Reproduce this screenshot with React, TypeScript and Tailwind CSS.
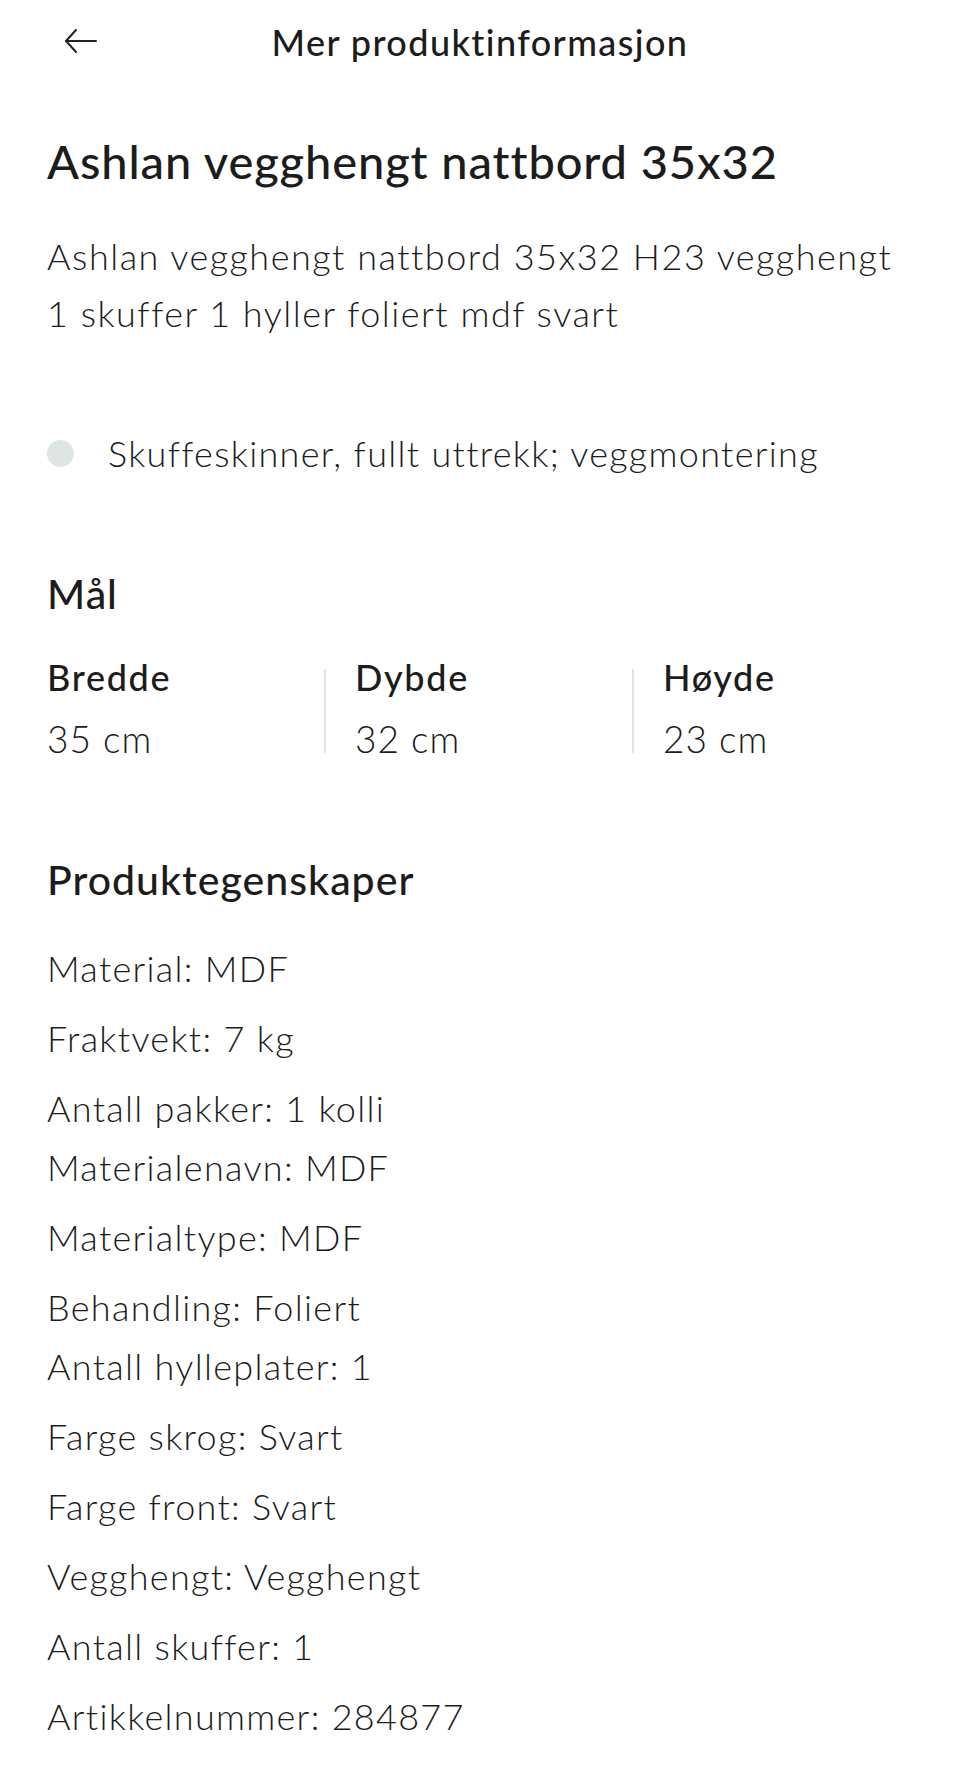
const props: string[][] = [
  ["Material: MDF"],
  ["Fraktvekt: 7 kg"],
  ["Antall pakker: 1 kolli", "Materialenavn: MDF"],
  ["Materialtype: MDF"],
  ["Behandling: Foliert", "Antall hylleplater: 1"],
  ["Farge skrog: Svart"],
  ["Farge front: Svart"],
  ["Vegghengt: Vegghengt"],
  ["Antall skuffer: 1"],
  ["Artikkelnummer: 284877"],
];

const dims = [
  { label: "Bredde", value: "35 cm" },
  { label: "Dybde", value: "32 cm" },
  { label: "Høyde", value: "23 cm" },
];

function BackArrow() {
  return (
    <svg width="34" height="26" viewBox="0 0 34 26" fill="none" stroke="currentColor" strokeWidth="2" strokeLinecap="round" strokeLinejoin="round">
      <path d="M32 13H2" />
      <path d="M12 2L2 13l10 11" />
    </svg>
  );
}

export default function App() {
  return (
    <div className="min-h-[1771px] w-[960px] bg-white font-['Lato',sans-serif] text-[#1c1c1c]">
      <header className="relative flex h-[84px] items-center justify-center">
        <button className="absolute left-[64px] top-[28px] text-[#222]" type="button">
          <BackArrow />
        </button>
        <h1 className="text-[36px] font-medium tracking-[1.4px]">Mer produktinformasjon</h1>
      </header>

      <main className="px-[47px]">
        <h2 className="mt-[48px] text-[47px] font-medium leading-[58px] tracking-[0.9px]">
          Ashlan vegghengt nattbord 35x32
        </h2>
        <p className="mt-[38px] max-w-[862px] text-[36px] font-light leading-[57px] tracking-[1.5px]">
          Ashlan vegghengt nattbord 35x32 H23 vegghengt 1 skuffer 1 hyller foliert mdf svart
        </p>

        <ul className="mt-[83px]">
          <li className="flex items-center gap-[34px] text-[36px] font-light leading-[57px] tracking-[1.3px]">
            <span className="h-[27px] w-[27px] shrink-0 rounded-full bg-[#dfe5e5]" />
            Skuffeskinner, fullt uttrekk; veggmontering
          </li>
        </ul>

        <section className="mt-[84px]">
          <h3 className="text-[41px] font-medium leading-[56px] tracking-[1px]">Mål</h3>
          <div className="mt-[31px] flex">
            {dims.map((d, i) => (
              <div key={d.label} className={i === 0 ? "flex w-[277px]" : i === 1 ? "flex w-[308px]" : "flex flex-1"}>
                {i > 0 && <div className="mt-[16px] mr-[29px] h-[84px] w-[2px] bg-[#e3e3e3]" />}
                <div>
                  <div className="text-[36px] font-medium leading-[48px] tracking-[1.7px]">{d.label}</div>
                  <div className="mt-[14px] text-[37px] font-light leading-[48px] tracking-[1px]">{d.value}</div>
                </div>
              </div>
            ))}
          </div>
        </section>

        <section className="mt-[89px] pb-[20px]">
          <h3 className="text-[41px] font-medium leading-[56px] tracking-[1px]">Produktegenskaper</h3>
          <div className="mt-[31px] flex flex-col gap-[11px]">
            {props.map((group, i) => (
              <p key={i} className="text-[36px] font-light leading-[59px] tracking-[1.3px]">
                {group.map((line, j) => (
                  <span key={j} className="block">
                    {line}
                  </span>
                ))}
              </p>
            ))}
          </div>
        </section>
      </main>
    </div>
  );
}
